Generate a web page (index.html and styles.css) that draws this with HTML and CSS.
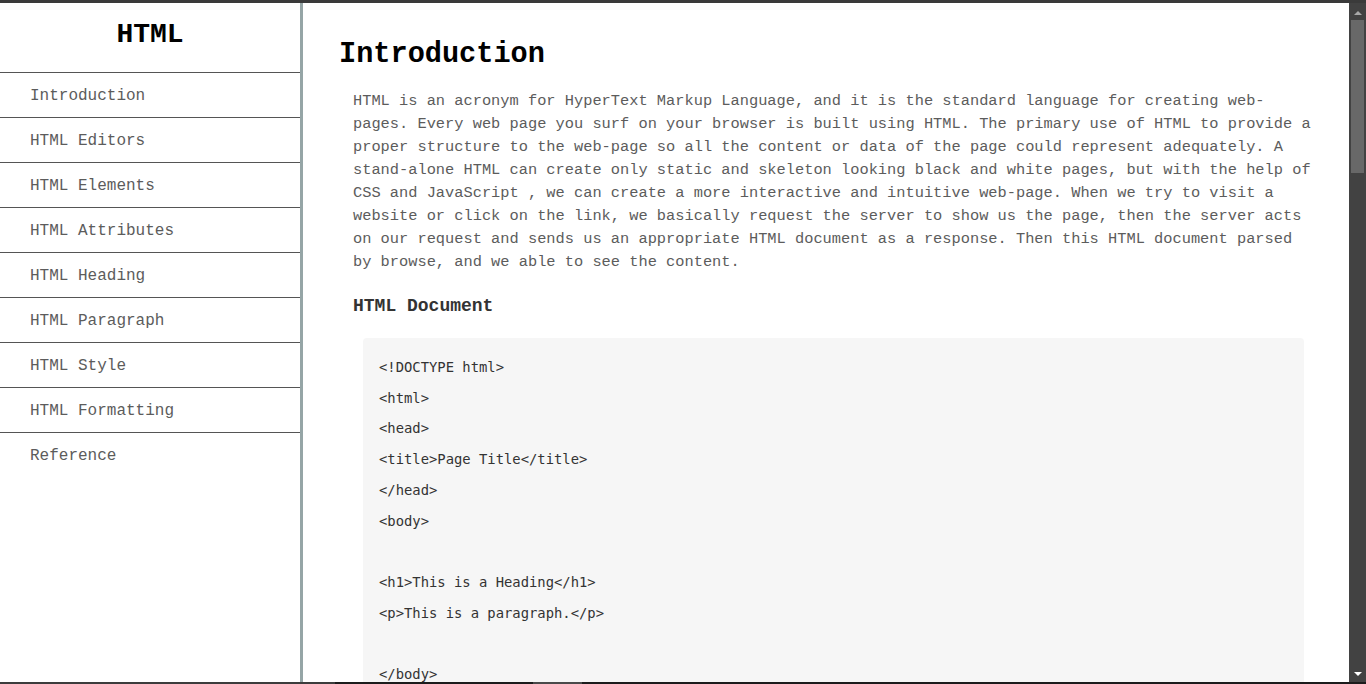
FILE: index.html
```html
<!DOCTYPE html>
<html lang="en">
<head>
<meta charset="utf-8">
<title>HTML Tutorial</title>
<link rel="stylesheet" href="styles.css">
</head>
<body>
<div class="topbar"></div>
<div class="frame">
  <nav class="sidebar">
    <header class="side-head">HTML</header>
    <ul class="nav">
      <li class="nav-item">Introduction</li>
      <li class="nav-item">HTML Editors</li>
      <li class="nav-item">HTML Elements</li>
      <li class="nav-item">HTML Attributes</li>
      <li class="nav-item">HTML Heading</li>
      <li class="nav-item">HTML Paragraph</li>
      <li class="nav-item">HTML Style</li>
      <li class="nav-item">HTML Formatting</li>
      <li class="nav-item nav-last">Reference</li>
    </ul>
  </nav>
  <main class="main">
    <h1 class="title">Introduction</h1>
    <p class="lead">HTML is an acronym for HyperText Markup Language, and it is the standard language for creating web-pages. Every web page you surf on your browser is built using HTML. The primary use of HTML to provide a proper structure to the web-page so all the content or data of the page could represent adequately. A stand-alone HTML can create only static and skeleton looking black and white pages, but with the help of CSS and JavaScript , we can create a more interactive and intuitive web-page. When we try to visit a website or click on the link, we basically request the server to show us the page, then the server acts on our request and sends us an appropriate HTML document as a response. Then this HTML document parsed by browse, and we able to see the content.</p>
    <h3 class="sub">HTML Document</h3>
    <pre class="code">&lt;!DOCTYPE html&gt;
&lt;html&gt;
&lt;head&gt;
&lt;title&gt;Page Title&lt;/title&gt;
&lt;/head&gt;
&lt;body&gt;

&lt;h1&gt;This is a Heading&lt;/h1&gt;
&lt;p&gt;This is a paragraph.&lt;/p&gt;

&lt;/body&gt;
&lt;/html&gt;</pre>
  </main>
  <div class="vscroll">
    <div class="arrow-up"></div>
    <div class="thumb"></div>
    <div class="vspace"></div>
    <div class="arrow-down"></div>
  </div>
</div>
<div class="bottombar">
  <div class="bb-a"></div>
  <div class="bb-b"></div>
  <div class="bb-c"></div>
  <div class="bb-d"></div>
</div>
</body>
</html>
```
FILE: styles.css
```css
* { box-sizing: border-box; }
html, body { margin: 0; padding: 0; height: 684px; overflow: hidden; background: #fff; }
body { display: flex; flex-direction: column; font-family: "Liberation Mono", "Courier New", monospace; }

.topbar { height: 3px; background: #3a3a3a; flex: none; }

.frame { flex: none; height: 679px; display: flex; }

.sidebar {
  width: 303px;
  flex: none;
  border-right: 3px solid #95a5a6;
  background: #fff;
}
.side-head {
  height: 70px;
  border-bottom: 1px solid #555;
  padding-top: 16px;
  text-align: center;
  font-weight: bold;
  font-size: 28px;
  line-height: 32px;
  color: #000;
}
.nav { list-style: none; margin: 0; padding: 0; }
.nav-item {
  height: 45px;
  border-bottom: 1px solid #555;
  padding: 2px 0 0 30px;
  font-size: 16px;
  line-height: 42px;
  color: #5c5c5c;
}
.nav-last { border-bottom: none; }

.main {
  flex: 1;
  min-width: 0;
  overflow: hidden;
  padding: 35px 36px 0 36px;
}
.title {
  margin: 0;
  font-size: 28.6px;
  line-height: 34px;
  font-weight: bold;
  color: #000;
}
.lead {
  margin: 18px 0 0 14px;
  font-size: 15.35px;
  line-height: 23px;
  color: #5c5c5c;
}
.sub {
  margin: 21px 0 0 14px;
  font-size: 18px;
  line-height: 22px;
  font-weight: bold;
  color: #333;
}
.code {
  margin: 21px 9px 0 24px;
  padding: 14px 16px 20px 16px;
  background: #f6f6f6;
  border-radius: 4px;
  font-family: "DejaVu Sans Mono", monospace;
  font-size: 13.85px;
  line-height: 30.7px;
  color: #333;
  white-space: pre;
}

.vscroll {
  width: 17px;
  flex: none;
  background: #424242;
  display: flex;
  flex-direction: column;
  align-items: center;
}
.arrow-up {
  margin-top: 8px;
  width: 0; height: 0;
  border-left: 4px solid transparent;
  border-right: 4px solid transparent;
  border-bottom: 4px solid #a8a8a8;
}
.thumb {
  margin-top: 5px;
  width: 13px;
  height: 153px;
  background: #686868;
}
.vspace { flex: 1; }
.arrow-down {
  margin-bottom: 6px;
  width: 0; height: 0;
  border-left: 4px solid transparent;
  border-right: 4px solid transparent;
  border-top: 4px solid #ffffff;
}

.bottombar { height: 2px; flex: none; display: flex; }
.bb-a { width: 335px; background: #3c3c3c; }
.bb-b { width: 198px; background: #1c1c1c; }
.bb-c { width: 49px; background: #4a4a4a; }
.bb-d { flex: 1; background: #1c1c1c; }
```
